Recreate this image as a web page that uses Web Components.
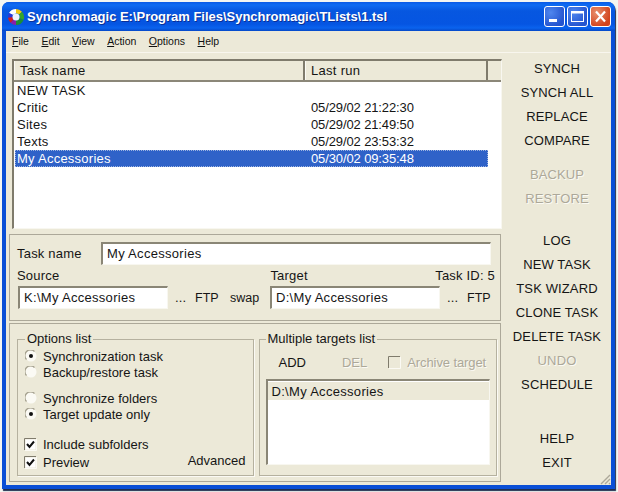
<!DOCTYPE html>
<html>
<head>
<meta charset="utf-8">
<title>Synchromagic</title>
<style>
  html, body { margin: 0; height: 100%; background: #f4f6f2; overflow: hidden; }
  body { padding: 2px 0 0 2px; box-sizing: border-box; font: 13px "Liberation Sans", Arial, sans-serif; color: #151515; }
</style>
</head>
<body>
<xp-window caption="Synchromagic E:\Program Files\Synchromagic\TLists\1.tsl">
  <menu-bar slot="menu" items="File,Edit,View,Action,Options,Help"></menu-bar>
  <task-list slot="list">
    <task-row name="NEW TASK"></task-row>
    <task-row name="Critic" run="05/29/02 21:22:30"></task-row>
    <task-row name="Sites" run="05/29/02 21:49:50"></task-row>
    <task-row name="Texts" run="05/29/02 23:53:32"></task-row>
    <task-row name="My Accessories" run="05/30/02 09:35:48" selected></task-row>
  </task-list>
  <task-form slot="form"></task-form>
  <bottom-panel slot="bottom"></bottom-panel>
  <command-column slot="commands">
    <cmd-button>SYNCH</cmd-button>
    <cmd-button>SYNCH ALL</cmd-button>
    <cmd-button>REPLACE</cmd-button>
    <cmd-button>COMPARE</cmd-button>
    <cmd-button gap="10" disabled>BACKUP</cmd-button>
    <cmd-button disabled>RESTORE</cmd-button>
    <cmd-button gap="18">LOG</cmd-button>
    <cmd-button>NEW TASK</cmd-button>
    <cmd-button>TSK WIZARD</cmd-button>
    <cmd-button>CLONE TASK</cmd-button>
    <cmd-button>DELETE TASK</cmd-button>
    <cmd-button disabled>UNDO</cmd-button>
    <cmd-button>SCHEDULE</cmd-button>
    <cmd-button gap="30">HELP</cmd-button>
    <cmd-button>EXIT</cmd-button>
  </command-column>
</xp-window>

<script>
// the window frame with caption and the two main columns
class XpWindow extends HTMLElement {
  constructor() {
    super();
    this.attachShadow({ mode: "open" });
    this.shadowRoot.innerHTML = `
      <style>
        :host {
          display: flex;
          flex-direction: column;
          width: 613px;
          height: 487px;
          box-sizing: border-box;
          border-radius: 7px 7px 0 0;
          background: #0a4fd6;
          box-shadow: 1px 2px 1px #20304f;
          position: relative;
        }
        .title {
          height: 29px;
          flex: none;
          display: flex;
          align-items: center;
          padding: 0 4px 0 5px;
          border-radius: 7px 7px 0 0;
          background: linear-gradient(#0a5ae6 0, #0f6cf2 3px, #0757e0 9px, #0555e2 22px, #0a63ee 26px, #0548c8 29px);
        }
        .title svg { flex: none; margin-right: 2px; }
        .caption {
          flex: 1;
          font: bold 13px "Liberation Sans", Tahoma, sans-serif;
          letter-spacing: -0.02px;
          color: #fff;
          text-shadow: 1px 1px 0 #0a2f96;
          white-space: nowrap;
        }
        .btn {
          width: 21px;
          height: 21px;
          margin-left: 2px;
          box-sizing: border-box;
          border: 1px solid #fff;
          border-radius: 3px;
          background: radial-gradient(circle at 30% 30%, #4f86ee, #2454cf 75%);
          display: block;
          flex: none;
        }
        .btn.close { background: radial-gradient(circle at 30% 30%, #e8906e, #d2431c 75%); }
        .body {
          flex: 1;
          margin: 0 4px 4px 4px;
          background: #ece9d8;
          display: flex;
          flex-direction: column;
          min-height: 0;
        }
        .menu { flex: none; height: 21px; border-bottom: 1px solid #f8f6ee; }
        .main { flex: 1; display: flex; min-height: 0; }
        .left { width: 492px; margin-left: 3px; flex: none; }
        .list { display: block; margin: 6px 0 0 3px; }
        .right { flex: 1; }
        .grip { position: absolute; right: 4px; bottom: 4px; }
      </style>
      <div class="title">
        <svg width="18" height="18" viewBox="0 0 18 18">
          <path d="M9 1 A8 8 0 0 0 2 5 L6 7 A3.5 3.5 0 0 1 9 5.5Z" fill="#fff"/>
          <path d="M9 1 A8 8 0 0 1 15 3.8 L12 6.5 A3.5 3.5 0 0 0 9 5.5Z" fill="#f2c80f"/>
          <path d="M15 3.8 A8 8 0 0 1 16.5 12 L12.3 10 A3.5 3.5 0 0 0 12 6.5Z" fill="#35a52a"/>
          <path d="M16.5 12 A8 8 0 0 1 9 17 L9 12.5 A3.5 3.5 0 0 0 12.3 10Z" fill="#1d8e35"/>
          <path d="M9 17 A8 8 0 0 1 3.5 14.8 L6.5 11.5 A3.5 3.5 0 0 0 9 12.5Z" fill="#8a1fa8"/>
          <path d="M3.5 14.8 A8 8 0 0 1 1 9.5 L5.5 9 A3.5 3.5 0 0 0 6.5 11.5Z" fill="#d81c1c"/>
          <path d="M1 9.5 A8 8 0 0 1 2 5 L6 7 A3.5 3.5 0 0 0 5.5 9Z" fill="#2a36d8"/>
          <circle cx="9" cy="9" r="3.5" fill="#eef4ff"/>
        </svg>
        <span class="caption"></span>
        <span class="btn">
          <svg width="19" height="19" style="display:block"><rect x="4" y="12" width="8" height="3" fill="#fff"/></svg>
        </span>
        <span class="btn">
          <svg width="19" height="19" style="display:block"><rect x="3.5" y="4.5" width="12" height="10" fill="none" stroke="#fff"/><rect x="3" y="4" width="13" height="2.5" fill="#fff"/></svg>
        </span>
        <span class="btn close">
          <svg width="19" height="19" style="display:block"><path d="M5 4.5 L14 14.5 M14 4.5 L5 14.5" stroke="#fff" stroke-width="2.2"/></svg>
        </span>
      </div>
      <div class="body">
        <div class="menu"><slot name="menu"></slot></div>
        <div class="main">
          <div class="left">
            <div class="list"><slot name="list"></slot></div>
            <slot name="form"></slot>
            <slot name="bottom"></slot>
          </div>
          <div class="right"><slot name="commands"></slot></div>
        </div>
      </div>
      <svg class="grip" width="12" height="12" viewBox="0 0 12 12">
        <path d="M11 2 L2 11 M11 6 L6 11 M11 10 L10 11" stroke="#aca899" stroke-width="1.4"/>
      </svg>
    `;
  }
  connectedCallback() {
    this.shadowRoot.querySelector(".caption").textContent = this.getAttribute("caption");
  }
}

class MenuBar extends HTMLElement {
  constructor() {
    super();
    this.attachShadow({ mode: "open" });
    this.shadowRoot.innerHTML = `
      <style>
        :host {
          display: flex;
          gap: 12.5px;
          height: 20px;
          align-items: center;
          padding-left: 6px;
          font: 10.5px "Liberation Sans", Arial, sans-serif;
          color: #111;
        }
        u { text-underline-offset: 1px; }
      </style>
    `;
  }
  connectedCallback() {
    for (const item of this.getAttribute("items").split(",")) {
      const span = document.createElement("span");
      span.innerHTML = "<u>" + item[0] + "</u>" + item.slice(1);
      this.shadowRoot.appendChild(span);
    }
  }
}

class TaskList extends HTMLElement {
  constructor() {
    super();
    this.attachShadow({ mode: "open" });
    this.shadowRoot.innerHTML = `
      <style>
        :host {
          display: block;
          width: 490px;
          height: 170px;
          box-sizing: border-box;
          background: #fff;
          border-top: 2px solid #7f7b6c;
          border-left: 2px solid #7f7b6c;
          border-right: 1px solid #f8f7f0;
          border-bottom: 1px solid #f8f7f0;
        }
        .head { display: flex; height: 19px; background: #ece9d8; border-bottom: 2px solid #8b8778; }
        .cell {
          box-sizing: border-box;
          padding-left: 5px;
          line-height: 19px;
          border-right: 2px solid #7f7b6c;
          border-left: 1px solid #fbfaf4;
          letter-spacing: 0.3px;
          font-size: 13px;
        }
        .c1 { width: 291px; }
        .c2 { width: 183px; }
        .rows { padding: 0 0 0 1px; width: 473px; }
      </style>
      <div class="head"><div class="cell c1">Task name</div><div class="cell c2">Last run</div></div>
      <div class="rows"><slot></slot></div>
    `;
  }
}

class TaskRow extends HTMLElement {
  constructor() {
    super();
    this.attachShadow({ mode: "open" });
    this.shadowRoot.innerHTML = `
      <style>
        :host {
          display: flex;
          height: 17px;
          line-height: 17px;
          padding-left: 2px;
          font-size: 13px;
          white-space: nowrap;
        }
        :host([selected]) {
          background: #2f62c8;
          color: #fff;
          outline: 1px dotted #9db4e0;
          outline-offset: -1px;
        }
        .name { width: 294px; letter-spacing: 0.25px; }
        .run { letter-spacing: -0.12px; }
      </style>
      <span class="name"></span><span class="run"></span>
    `;
  }
  connectedCallback() {
    this.shadowRoot.querySelector(".name").textContent = this.getAttribute("name");
    this.shadowRoot.querySelector(".run").textContent = this.getAttribute("run") || "";
  }
}

class TextBox extends HTMLElement {
  constructor() {
    super();
    this.attachShadow({ mode: "open" });
    this.shadowRoot.innerHTML = `
      <style>
        :host {
          display: block;
          flex: none;
          height: 23px;
          box-sizing: border-box;
          background: #fff;
          border-top: 2px solid #8a8676;
          border-left: 2px solid #8a8676;
          border-right: 1px solid #f8f7f0;
          border-bottom: 1px solid #f8f7f0;
          line-height: 20px;
          padding-left: 4px;
          font-size: 13px;
          letter-spacing: 0.3px;
          white-space: nowrap;
        }
      </style>
      <slot></slot>
    `;
  }
}

class TaskForm extends HTMLElement {
  constructor() {
    super();
    this.attachShadow({ mode: "open" });
    this.shadowRoot.innerHTML = `
      <style>
        :host {
          display: block;
          margin-top: 5px;
          height: 87px;
          box-sizing: border-box;
          padding: 8px 9px 0 8px;
          outline: 1px solid #aca899;
          outline-offset: -1px;
          box-shadow: inset 1px 1px 0 #fbfaf4;
          letter-spacing: 0.2px;
          font-size: 13px;
        }
        .row { display: flex; align-items: center; white-space: nowrap; }
        .name span { width: 84px; }
        .name text-box { width: 390px; }
        .labels { height: 21px; justify-content: space-between; box-sizing: border-box; }
        .labels .tgt { margin-left: 211px; flex: 1; }
        .labels .id { margin-right: -3px; }
        .src { width: 150px; margin-left: 1px; }
        .tgt-box { width: 170px; margin-left: 11px; }
        .dots { margin-left: 7px; width: 12px; }
        .ftp { margin-left: 8px; letter-spacing: 0; font-size: 12.5px; width: 23px; }
        .swap { margin-left: 12px; width: 29px; letter-spacing: 0; font-size: 12.5px; }
      </style>
      <div class="row name"><span>Task name</span><text-box>My Accessories</text-box></div>
      <div class="row labels"><span>Source</span><span class="tgt">Target</span><span class="id">Task ID: 5</span></div>
      <div class="row">
        <text-box class="src">K:\\My Accessories</text-box>
        <span class="dots">...</span><span class="ftp">FTP</span><span class="swap">swap</span>
        <text-box class="tgt-box">D:\\My Accessories</text-box>
        <span class="dots">...</span><span class="ftp">FTP</span>
      </div>
    `;
  }
}

class XpOption extends HTMLElement {
  constructor() {
    super();
    this.attachShadow({ mode: "open" });
  }
  connectedCallback() {
    const on = this.hasAttribute("checked");
    const mark = this.getAttribute("type") === "check"
      ? `<svg width="13" height="13" viewBox="0 0 13 13"><path d="M0.5 12 V0.5 H12" fill="none" stroke="#7f7b6c"/><path d="M12.5 1 V12.5 H1" fill="none" stroke="#fbfaf4"/>${on ? '<rect x="1.5" y="1.5" width="10" height="10" fill="#fff"/><path d="M3 6 L5.5 9 L10 3.5" fill="none" stroke="#111" stroke-width="2"/>' : ""}</svg>`
      : `<svg width="12" height="12" viewBox="0 0 12 12"><circle cx="6" cy="6" r="5.5" fill="#fbfaf4"/><path d="M1.5 9.5 A5.5 5.5 0 0 1 9.5 1.5" fill="none" stroke="#a39f8e" stroke-width="1.2"/>${on ? '<circle cx="6" cy="6" r="2" fill="#111"/>' : ""}</svg>`;
    this.shadowRoot.innerHTML = `
      <style>
        :host {
          display: flex;
          align-items: center;
          height: 16px;
          letter-spacing: 0;
          font-size: 13px;
          white-space: nowrap;
        }
        :host([disabled]) { color: #aca899; text-shadow: 1px 1px 0 #fbfaf4; }
        svg { flex: none; margin-right: 6px; display: block; }
      </style>
      ${mark}<span><slot></slot></span>
    `;
  }
}

// the two group boxes at the bottom of the left column
class BottomPanel extends HTMLElement {
  constructor() {
    super();
    this.attachShadow({ mode: "open" });
    this.shadowRoot.innerHTML = `
      <style>
        :host {
          display: flex;
          gap: 5px;
          margin-top: 2px;
          height: 159px;
          box-sizing: border-box;
          padding: 8px 4px 6px 8px;
          outline: 1px solid #aca899;
          outline-offset: -1px;
          font-size: 13px;
          letter-spacing: 0;
        }
        fieldset {
          margin: 0;
          min-width: 0;
          box-sizing: border-box;
          border: 1px solid #b5b19f;
          box-shadow: 1px 1px 0 #fbfaf4;
          height: 100%;
        }
        legend { padding: 0 2px; margin-left: 6px; line-height: 16px; }
        .opts { width: 237px; padding: 1px 0 0 7px; }
        .opts legend { margin-left: 0; }
        .blk { margin-top: 10px; }
        .blk2 { margin-top: 14px; margin-left: -1px; display: flex; flex-direction: column; gap: 2px; }
        .last { display: flex; justify-content: space-between; align-items: flex-start; padding-right: 7px; }
        .last span { margin-top: -1px; }
        .targets { width: 239px; padding: 0; }
        .tools { display: flex; align-items: center; height: 28px; margin-top: 1px; }
        .add { margin-left: 19px; }
        .del { margin-left: 36px; color: #aca899; text-shadow: 1px 1px 0 #fbfaf4; }
        .arch { margin-left: 21px; letter-spacing: -0.1px; }
        .box {
          margin: 3px 6px 0 6px;
          height: 86px;
          box-sizing: border-box;
          background: #fff;
          border-top: 2px solid #8a8676;
          border-left: 2px solid #8a8676;
          border-right: 1px solid #f8f7f0;
          border-bottom: 1px solid #f8f7f0;
          padding-top: 1px;
        }
        .sel { background: #ece9d8; height: 18px; line-height: 19px; padding-left: 4px; letter-spacing: 0.3px; }
      </style>
      <fieldset class="opts">
        <legend>Options list</legend>
        <x-option type="radio" checked>Synchronization task</x-option>
        <x-option type="radio">Backup/restore task</x-option>
        <div class="blk">
          <x-option type="radio">Synchronize folders</x-option>
          <x-option type="radio" checked>Target update only</x-option>
        </div>
        <div class="blk2">
          <x-option type="check" checked>Include subfolders</x-option>
          <div class="last"><x-option type="check" checked>Preview</x-option><span>Advanced</span></div>
        </div>
      </fieldset>
      <fieldset class="targets">
        <legend>Multiple targets list</legend>
        <div class="tools">
          <span class="add">ADD</span><span class="del">DEL</span>
          <x-option class="arch" type="check" disabled>Archive target</x-option>
        </div>
        <div class="box"><div class="sel">D:\\My Accessories</div></div>
      </fieldset>
    `;
  }
}

class CommandColumn extends HTMLElement {
  constructor() {
    super();
    this.attachShadow({ mode: "open" });
    this.shadowRoot.innerHTML = `
      <style>
        :host { display: flex; flex-direction: column; padding: 4px 0 0 2px; }
      </style>
      <slot></slot>
    `;
  }
}

class CmdButton extends HTMLElement {
  constructor() {
    super();
    this.attachShadow({ mode: "open" });
    this.shadowRoot.innerHTML = `
      <style>
        :host {
          display: block;
          height: 24px;
          line-height: 24px;
          text-align: center;
          font-size: 13px;
          white-space: nowrap;
          letter-spacing: 0.12px;
        }
        :host([disabled]) { color: #aca899; text-shadow: 1px 1px 0 #fbfaf4; }
      </style>
      <slot></slot>
    `;
  }
  connectedCallback() {
    const gap = this.getAttribute("gap");
    if (gap) this.style.marginTop = gap + "px";
  }
}

customElements.define("xp-window", XpWindow);
customElements.define("menu-bar", MenuBar);
customElements.define("task-list", TaskList);
customElements.define("task-row", TaskRow);
customElements.define("text-box", TextBox);
customElements.define("task-form", TaskForm);
customElements.define("x-option", XpOption);
customElements.define("bottom-panel", BottomPanel);
customElements.define("command-column", CommandColumn);
customElements.define("cmd-button", CmdButton);
</script>
</body>
</html>
